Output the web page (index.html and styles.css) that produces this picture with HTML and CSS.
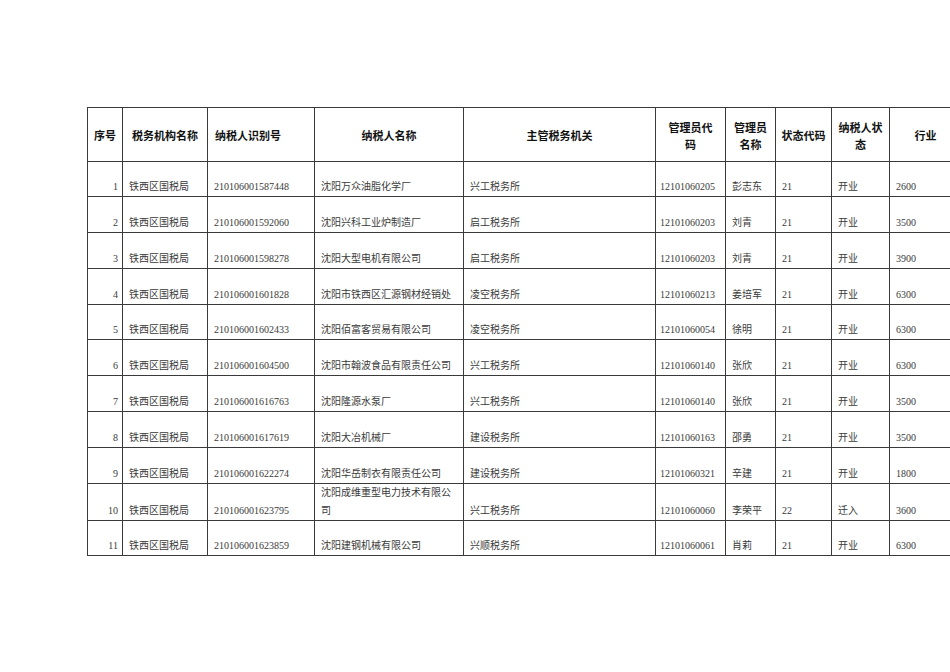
FILE: index.html
```html
<!DOCTYPE html>
<html lang="zh-CN">
<head>
<meta charset="utf-8">
<title>税务登记表</title>
<link rel="stylesheet" href="styles.css">
</head>
<body>
<div class="page">
<table class="grid">
<colgroup>
<col class="c1"><col class="c2"><col class="c3"><col class="c4"><col class="c5">
<col class="c6"><col class="c7"><col class="c8"><col class="c9"><col class="c10">
</colgroup>
<thead>
<tr class="head">
<th>序号</th>
<th>税务机构名称</th>
<th class="left">纳税人识别号</th>
<th>纳税人名称</th>
<th>主管税务机关</th>
<th>管理员代<br>码</th>
<th>管理员<br>名称</th>
<th>状态代码</th>
<th>纳税人状<br>态</th>
<th>行业</th>
</tr>
</thead>
<tbody>
<tr><td class="num">1</td><td>铁西区国税局</td><td>210106001587448</td><td>沈阳万众油脂化学厂</td><td>兴工税务所</td><td class="code">12101060205</td><td>彭志东</td><td>21</td><td>开业</td><td>2600</td></tr>
<tr><td class="num">2</td><td>铁西区国税局</td><td>210106001592060</td><td>沈阳兴科工业炉制造厂</td><td>启工税务所</td><td class="code">12101060203</td><td>刘青</td><td>21</td><td>开业</td><td>3500</td></tr>
<tr><td class="num">3</td><td>铁西区国税局</td><td>210106001598278</td><td>沈阳大型电机有限公司</td><td>启工税务所</td><td class="code">12101060203</td><td>刘青</td><td>21</td><td>开业</td><td>3900</td></tr>
<tr><td class="num">4</td><td>铁西区国税局</td><td>210106001601828</td><td>沈阳市铁西区汇源钢材经销处</td><td>凌空税务所</td><td class="code">12101060213</td><td>姜培军</td><td>21</td><td>开业</td><td>6300</td></tr>
<tr><td class="num">5</td><td>铁西区国税局</td><td>210106001602433</td><td>沈阳佰富客贸易有限公司</td><td>凌空税务所</td><td class="code">12101060054</td><td>徐明</td><td>21</td><td>开业</td><td>6300</td></tr>
<tr><td class="num">6</td><td>铁西区国税局</td><td>210106001604500</td><td>沈阳市翰波食品有限责任公司</td><td>兴工税务所</td><td class="code">12101060140</td><td>张欣</td><td>21</td><td>开业</td><td>6300</td></tr>
<tr><td class="num">7</td><td>铁西区国税局</td><td>210106001616763</td><td>沈阳隆源水泵厂</td><td>兴工税务所</td><td class="code">12101060140</td><td>张欣</td><td>21</td><td>开业</td><td>3500</td></tr>
<tr><td class="num">8</td><td>铁西区国税局</td><td>210106001617619</td><td>沈阳大冶机械厂</td><td>建设税务所</td><td class="code">12101060163</td><td>邵勇</td><td>21</td><td>开业</td><td>3500</td></tr>
<tr><td class="num">9</td><td>铁西区国税局</td><td>210106001622274</td><td>沈阳华岳制衣有限责任公司</td><td>建设税务所</td><td class="code">12101060321</td><td>辛建</td><td>21</td><td>开业</td><td>1800</td></tr>
<tr><td class="num">10</td><td>铁西区国税局</td><td>210106001623795</td><td>沈阳成维重型电力技术有限公<br>司</td><td>兴工税务所</td><td class="code">12101060060</td><td>李荣平</td><td>22</td><td>迁入</td><td>3600</td></tr>
<tr><td class="num">11</td><td>铁西区国税局</td><td>210106001623859</td><td>沈阳建钢机械有限公司</td><td>兴顺税务所</td><td class="code">12101060061</td><td>肖莉</td><td>21</td><td>开业</td><td>6300</td></tr>
</tbody>
</table>
</div>
</body>
</html>
```

FILE: styles.css
```css
html, body {
  margin: 0;
  padding: 0;
  background: #ffffff;
  overflow: hidden;
}

.page {
  width: 950px;
  height: 672px;
  padding: 107px 0 0 87px;
  box-sizing: border-box;
  overflow: hidden;
}

.grid {
  border-collapse: collapse;
  table-layout: fixed;
  width: 874px;
  color: #1a1a1a;
}

.c1 { width: 35px; }
.c2 { width: 85px; }
.c3 { width: 107px; }
.c4 { width: 149px; }
.c5 { width: 192px; }
.c6 { width: 70px; }
.c7 { width: 50px; }
.c8 { width: 56px; }
.c9 { width: 58px; }
.c10 { width: 72px; }

.grid th,
.grid td {
  border: 1px solid #3a3a3a;
  overflow: hidden;
  white-space: nowrap;
}

.head th {
  height: 49.5px;
  padding: 3px 4px 0;
  font-family: "Noto Sans CJK SC", "Liberation Sans", sans-serif;
  font-weight: bold;
  font-size: 11px;
  line-height: 17px;
  text-align: center;
  vertical-align: middle;
  color: #111;
}

.head th.left {
  text-align: left;
  padding-left: 7px;
}

.grid tbody tr {
  height: 35.8px;
}

.grid td {
  padding: 0 4px 0 6px;
  font-family: "Liberation Serif", "Noto Sans CJK SC", serif;
  font-size: 10px;
  line-height: 18px;
  vertical-align: bottom;
  text-align: left;
  color: #3a3a3a;
}

.grid td.num {
  text-align: right;
  padding-right: 4px;
}

.grid td.code {
  padding-left: 4px;
  padding-right: 2px;
}
```
